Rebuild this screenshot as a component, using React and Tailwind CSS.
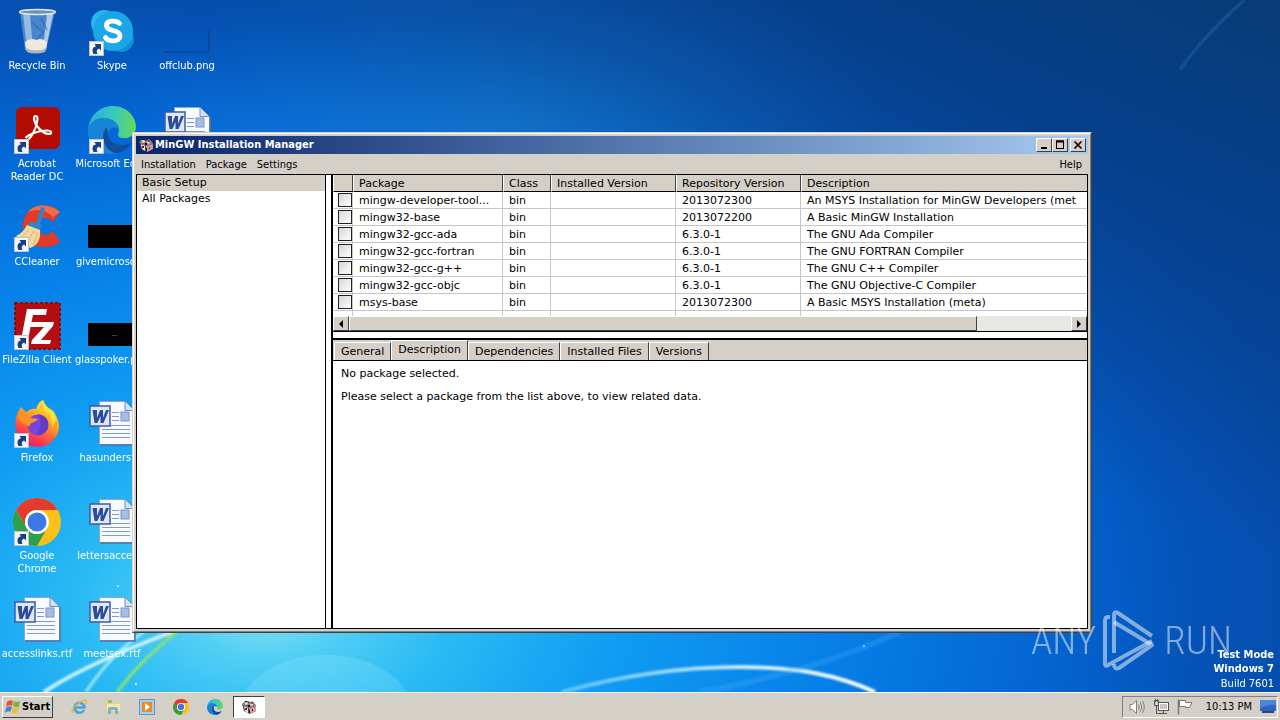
import React, { useState } from "react";

const packages = [
  { name: "mingw-developer-tool...", cls: "bin", repo: "2013072300", desc: "An MSYS Installation for MinGW Developers (met" },
  { name: "mingw32-base", cls: "bin", repo: "2013072200", desc: "A Basic MinGW Installation" },
  { name: "mingw32-gcc-ada", cls: "bin", repo: "6.3.0-1", desc: "The GNU Ada Compiler" },
  { name: "mingw32-gcc-fortran", cls: "bin", repo: "6.3.0-1", desc: "The GNU FORTRAN Compiler" },
  { name: "mingw32-gcc-g++", cls: "bin", repo: "6.3.0-1", desc: "The GNU C++ Compiler" },
  { name: "mingw32-gcc-objc", cls: "bin", repo: "6.3.0-1", desc: "The GNU Objective-C Compiler" },
  { name: "msys-base", cls: "bin", repo: "2013072300", desc: "A Basic MSYS Installation (meta)" },
];

const tabs = ["General", "Description", "Dependencies", "Installed Files", "Versions"];

const raised = "border border-t-white border-l-white border-r-[#404040] border-b-[#404040] bg-[#d4d0c8]";

/* ---------- wallpaper ---------- */

const Wallpaper = () => (
  <svg className="absolute inset-0 h-full w-full" viewBox="0 0 1280 692" preserveAspectRatio="none" aria-hidden="true">
    <defs>
      <radialGradient id="glow" gradientUnits="userSpaceOnUse" cx="0" cy="0" r="1" gradientTransform="translate(265 610) scale(1080 690)">
        <stop offset="0" stopColor="#84e3f3" />
        <stop offset="0.07" stopColor="#52cff4" />
        <stop offset="0.17" stopColor="#2abbf4" />
        <stop offset="0.32" stopColor="#109df2" />
        <stop offset="0.5" stopColor="#0783ea" />
        <stop offset="0.7" stopColor="#0468d6" />
        <stop offset="0.86" stopColor="#0553b8" />
        <stop offset="1" stopColor="#054ba8" />
      </radialGradient>
      <linearGradient id="corner" x1="1" y1="0" x2="0.6" y2="0.5">
        <stop offset="0" stopColor="#0a3566" stopOpacity="0.75" />
        <stop offset="1" stopColor="#02306f" stopOpacity="0" />
      </linearGradient>
      <radialGradient id="topGlow" cx="0.4" cy="0.2" r="0.3">
        <stop offset="0" stopColor="#2090dc" stopOpacity="0.55" />
        <stop offset="1" stopColor="#1b84da" stopOpacity="0" />
      </radialGradient>
      <linearGradient id="swoosh">
        <stop offset="0" stopColor="#8fdcff" stopOpacity="0.6" />
        <stop offset="0.6" stopColor="#e8fbff" stopOpacity="0.9" />
        <stop offset="1" stopColor="#fff" />
      </linearGradient>
      <filter id="soft"><feGaussianBlur stdDeviation="1" /></filter>
    </defs>
    <rect width="1280" height="692" fill="url(#glow)" />
    <rect width="1280" height="692" fill="url(#topGlow)" />
    <rect width="1280" height="692" fill="url(#corner)" />
    <ellipse cx="326" cy="712" rx="86" ry="57" fill="#a8f0ff" opacity="0.2" />
    <g fill="none" filter="url(#soft)">
      <path d="M44 692C80 668 130 648 182 628" stroke="#e4faff" strokeWidth="4" opacity="0.85" />
      <path d="M86 692C102 668 118 650 146 630" stroke="#b8f2ff" strokeWidth="3" opacity="0.8" />
      <path d="M117 692C135 668 155 648 182 628" stroke="#8be36c" strokeWidth="3" />
      <path d="M562 692C620 676 680 667 740 667C800 667 840 676 875 692" stroke="url(#swoosh)" strokeWidth="4" />
      <path d="M700 692C780 678 850 655 900 632" stroke="#4fb4ff" strokeWidth="6" opacity="0.25" />
      <path d="M1180 70C1196 46 1222 20 1244 0" stroke="#5fb0f0" strokeWidth="2" opacity="0.3" />
    </g>
    <circle cx="136" cy="684" r="1" fill="#fff" />
    <circle cx="118" cy="586" r="1" fill="#c8f6ff" />
    <circle cx="864" cy="646" r="1" fill="#9be0ff" />
  </svg>
);

/* ---------- desktop icons, 48 x 48 ---------- */

const Shortcut = () => (
  <g>
    <rect x="1.500" y="33.500" width="14" height="14" fill="#f4f6fa" stroke="#b9c3d2" />
    <path d="M5.500 46C3.500 42 5 38.500 8 38.500L6.500 36H13V42.500L11 40.500C8.500 41.500 8 43.500 9.500 46Z" fill="#173f86" />
  </g>
);

const Icon48 = ({ children, shortcut }) => (
  <svg viewBox="0 0 48 48" className="h-12 w-12 shrink-0" aria-hidden="true">
    {children}
    {shortcut && <Shortcut />}
  </svg>
);

const RecycleBin = () => (
  <Icon48>
    <path d="M7 4L12 42Q24 47 33 42L42 4Z" fill="#8db8e6" opacity="0.5" />
    <path d="M10 6L14 41H20L17 6Z" fill="#e4f1fc" opacity="0.5" />
    <path d="M34 6L30 40L33 41L40 6Z" fill="#eef7ff" opacity="0.6" />
    <path d="M18 14L30 24L22 34M28 10L34 22" stroke="#2563b6" strokeWidth="1.500" fill="none" opacity="0.6" />
    <path d="M12 34Q18 29 23 32Q29 29 34 34L33 42Q23 46 13 42Z" fill="#eee9df" />
    <path d="M13 40Q23 45 33 40L32 44Q22 47 14 44Z" fill="#aeb4bb" />
    <ellipse cx="24.500" cy="4" rx="18" ry="2.500" fill="#6f91b5" stroke="#dfe5ea" strokeWidth="1.500" />
  </Icon48>
);

const Skype = () => (
  <Icon48 shortcut>
    <circle cx="16" cy="15" r="13" fill="#29b5f0" />
    <circle cx="33" cy="31" r="13" fill="#0f8fdc" />
    <circle cx="25" cy="23" r="20" fill="#1ba6e8" />
    <path d="M31.500 15.500C29 12.500 18.500 11.500 18.500 17.500C18.500 24 32 21 32 28C32 34.500 20 34 17.500 29.500" stroke="#fff" strokeWidth="4.800" strokeLinecap="round" fill="none" />
  </Icon48>
);

const BlankPng = () => (
  <Icon48>
    <path d="M1 44H46V22" fill="none" stroke="#083f92" strokeWidth="1.500" opacity="0.7" />
  </Icon48>
);

const Acrobat = () => (
  <Icon48 shortcut>
    <rect x="3" y="1" width="44" height="42" rx="6" fill="#b30b00" />
    <path d="M12 36C18 33 24 22 24.500 13C24.500 9 20.500 9 21 13C22 20 30 28 36 28C39.500 28 38.500 24.500 34 24.500C26 24.500 16 28 12.500 32" fill="none" stroke="#fff" strokeWidth="2.200" />
  </Icon48>
);

const EdgeShape = ({ id }) => (
  <g>
    <defs>
      <linearGradient id={id} x1="0" y1="0.4" x2="1" y2="0.5">
        <stop offset="0" stopColor="#2badde" />
        <stop offset="0.5" stopColor="#36c8c0" />
        <stop offset="1" stopColor="#66d85a" />
      </linearGradient>
    </defs>
    <path d="M0 25C1 9 12 0 25 0C39 0 48 11 48 21C48 29 41 33 34 32C29 31 30 28 31 25C31 17 24 12 15 13C7 14 2 18 0 25Z" fill={`url(#${id})`} />
    <path d="M0 25C1 16 9 11 17 12C25 13 31 18 31 24C27 19 21 22 20 28C19 37 28 43 39 38L44 36C38 45 31 48 24 48C10 48 0 38 0 25Z" fill="#1784d6" />
    <path d="M18 21C12 31 16 44 28 47.500C35 47 41 42 44 36C33 42 22 38 20 29Q20 24 18 21Z" fill="#114f9c" />
  </g>
);

const Edge = () => (
  <Icon48 shortcut>
    <EdgeShape id="edgeBig" />
  </Icon48>
);

const CCleaner = () => (
  <Icon48 shortcut>
    <path d="M47 8C36-3 11-1 10 22C10 44 34 48 47 38L40 27C34 34 25 31 25 22C25 14 34 11 40 18Z" fill="#e23a25" />
    <path d="M47 8C38 0 22-1 15 8Q29 2 40 13Z" fill="#f36b4a" />
    <path d="M28 3L32 4L27 20L29 22L26 27L14 22L17 18L23 19Z" fill="#2e86c6" />
    <path d="M14 21L27 26C28 36 24 42 17 44L3 32Q10 29 14 21Z" fill="#f3d79b" />
    <path d="M16 25L8 34M21 26L14 40M25 28L20 42" stroke="#dcb877" strokeWidth="1" />
  </Icon48>
);

const BlackTile = ({ mark }) => (
  <Icon48>
    <rect y="21" width="48" height="23" fill="#000" />
    {mark && <path d="M24 33.500h5" stroke="#27541f" />}
  </Icon48>
);

const FileZilla = () => (
  <Icon48 shortcut>
    <rect x="2" y="1" width="45" height="46" fill="#b50e12" stroke="#8d080b" strokeWidth="2" strokeDasharray="3 2" />
    <path d="M14 7H34L33 13H20L18.500 20H28L27 25H17.500L15 38H8Z" fill="#fff" />
    <path d="M24 20H41L40 24L28 38H38L37 42H18L19 38L31 25H23Z" fill="#fff" />
  </Icon48>
);

const Firefox = () => (
  <Icon48 shortcut>
    <defs>
      <linearGradient id="fox" x1="0.8" y1="0" x2="0.3" y2="1">
        <stop offset="0" stopColor="#fff04a" />
        <stop offset="0.45" stopColor="#ff9a1f" />
        <stop offset="0.8" stopColor="#fb3750" />
        <stop offset="1" stopColor="#e5186e" />
      </linearGradient>
    </defs>
    <path d="M5 12L8 7L13 12Q18 8 23 9Q25 2 30 0Q32 7 39 10Q50 23 44 35Q37 47 25 47Q9 46 4 33Q0 22 5 12Z" fill="url(#fox)" />
    <circle cx="25" cy="25" r="10.500" fill="#7545dd" />
    <path d="M25 14Q37 16 35 28Q32 34 24 35Q31 25 25 14Z" fill="#5937b5" opacity="0.7" />
    <path d="M4 16Q14 14 18 18L25 19Q23 22 18 23L16 27Q14 24 10 24Z" fill="#ff9024" />
    <path d="M30 0Q28 7 34 13Q40 18 39 27Q45 20 41 12Q33 8 30 0Z" fill="#ffdf3a" />
  </Icon48>
);

const ChromeShape = () => (
  <g>
    <circle cx="24" cy="24" r="24" fill="#fbc116" />
    <path d="M3.200 12A24 24 0 0 1 44.800 12H24A12 12 0 0 0 13.600 30Z" fill="#e33b2e" />
    <path d="M3.200 12L13.600 30A12 12 0 0 0 34.400 30L24 48A24 24 0 0 1 3.200 12Z" fill="#2da04b" />
    <circle cx="24" cy="24" r="12" fill="#fff" />
    <circle cx="24" cy="24" r="9.500" fill="#3a78e6" />
  </g>
);

const Chrome = () => (
  <Icon48 shortcut>
    <ChromeShape />
  </Icon48>
);

const WordDoc = () => (
  <Icon48>
    <path d="M11.500 1.500H37L46.500 11V44.500H11.500Z" fill="#f7faff" stroke="#8ea4cf" />
    <path d="M47 11V45H12" fill="none" stroke="#5570ad" strokeWidth="1.500" />
    <path d="M37 1V10.500H46.500Z" fill="#d5e2f6" stroke="#6f8cc2" />
    <path d="M24 12.500H31M24 16.500H31M24 20.500H31M14 25.500H42M14 29.500H42M14 33.500H42M14 37.500H42" stroke="#8199cf" />
    <rect x="33" y="12" width="8" height="9" fill="#a7bce4" stroke="#7c94cb" />
    <rect x="2" y="6" width="20" height="20" fill="#dfe8f8" stroke="#3b5ba8" strokeWidth="1.500" />
    <path d="M4.500 10H9L9 18L12 10H15L15 18L18 10H21L15.500 23H12.500V16L9.500 23H6.500Z" fill="#2c4c9c" />
  </Icon48>
);

const desktopIcons = [
  { label: "Recycle Bin", Icon: RecycleBin },
  { label: "Acrobat Reader DC", Icon: Acrobat },
  { label: "CCleaner", Icon: CCleaner },
  { label: "FileZilla Client", Icon: FileZilla },
  { label: "Firefox", Icon: Firefox },
  { label: "Google Chrome", Icon: Chrome },
  { label: "accesslinks.rtf", Icon: WordDoc },
  { label: "Skype", Icon: Skype },
  { label: "Microsoft Edge", Icon: Edge },
  { label: "givemicrosof...", Icon: BlackTile },
  { label: "glasspoker.png", Icon: () => <BlackTile mark /> },
  { label: "hasunderst...", Icon: WordDoc },
  { label: "lettersacces...", Icon: WordDoc },
  { label: "meetsex.rtf", Icon: WordDoc },
  { label: "offclub.png", Icon: BlankPng },
  { label: "", Icon: WordDoc },
];

// labels that wrap onto a second line
const wrapped = ["Acrobat Reader DC", "Google Chrome"];

const DesktopIcon = ({ label, Icon }) => (
  <div className="flex h-[98px] w-[74px] flex-col items-center gap-[3px]">
    <Icon />
    <span
      className={`text-center text-[11px] leading-[13px] text-white ${
        wrapped.includes(label) ? "w-[60px]" : "whitespace-nowrap"
      }`}
    >
      {label}
    </span>
  </div>
);

/* ---------- small icons ---------- */

const MingwIcon = () => (
  <svg viewBox="0 0 16 16" className="h-4 w-4 shrink-0" aria-hidden="true">
    <path d="M1 5L7 2L15 7V12L9 15L3 12Z" fill="#4a4041" />
    <path d="M3 7L7 9V14L4 12Z" fill="#eee6e4" />
    <path d="M8 9L15 7V12L9 15Z" fill="#d79a9d" />
    <path d="M1 5L4 2L8 4L11 2L15 6L14 8L8 9L3 7Z" fill="#8d8083" />
    <path d="M3 4L6 3L7 5L5 6ZM9 5L11 4L12 6L10 7Z" fill="#e8dedd" />
    <path d="M10 3H12V5H10ZM5 6H7V7H5Z" fill="#8f4650" />
    <path d="M4 9H6V11H4ZM11 10H12V12H11Z" fill="#70222c" />
    <path d="M2 4H4V5H2ZM12 3H13V4H12Z" fill="#4b9a92" />
    <path d="M7 6H9V8H7ZM8 11H9V14H8ZM4 2H6V3H4Z" fill="#1a1517" />
  </svg>
);

const StartFlag = () => (
  <svg viewBox="0 0 16 16" className="h-4 w-4" aria-hidden="true">
    <path d="M2 3Q5 0 8 2L7 7Q4 5 1 8Z" fill="#e8552b" />
    <path d="M9 2Q12 4 15 2L14 8Q11 9 8 7Z" fill="#76b83f" />
    <path d="M1 9Q4 6 7 8L5 13Q3 11 0 14Z" fill="#3d83d6" />
    <path d="M8 8Q11 10 14 9L12 14Q9 15 6 13Z" fill="#f4bd2b" />
  </svg>
);

const IeIcon = () => (
  <svg viewBox="0 0 16 16" className="h-4 w-4" aria-hidden="true">
    <path d="M13 11A5 5 0 1 1 13.500 8.500H4" fill="none" stroke="#45a7e0" strokeWidth="2.600" />
    <path d="M1 14C0 10 8 2 15 1C16 2 15 4 14 5" fill="none" stroke="#e8b92f" strokeWidth="1.300" />
  </svg>
);

const ExplorerIcon = () => (
  <svg viewBox="0 0 16 16" className="h-4 w-4" aria-hidden="true">
    <path d="M1 2H6L7 4H14V14H1Z" fill="#e9cf70" />
    <path d="M3 1H7V4H3Z" fill="#8cc27c" />
    <path d="M2 5H15V12H2Z" fill="#f8e9a6" />
    <path d="M3 15V10Q3 8 5 8H11Q13 8 13 10V15H10V11H6V15Z" fill="#75b5dd" />
  </svg>
);

const MediaIcon = () => (
  <svg viewBox="0 0 16 16" className="h-4 w-4" aria-hidden="true">
    <rect x="0.500" y="0.500" width="15" height="15" fill="#a8cde8" stroke="#5f98c4" />
    <rect x="3" y="3" width="10" height="10" fill="#f08a1c" />
    <path d="M6 4L11 8L6 12Z" fill="#fff" />
  </svg>
);

const SpeakerIcon = () => (
  <svg viewBox="0 0 16 16" className="h-4 w-4" fill="none" stroke="#808080" aria-hidden="true">
    <path d="M1 5.500H3.500L7.500 1.500V14.500L3.500 10.500H1Z" fill="#fff" />
    <path d="M9.500 5.500Q11 8 9.500 10.500M11.500 3.500Q14 8 11.500 12.500M13.500 2Q17 8 13.500 14" />
  </svg>
);

const NetworkIcon = () => (
  <svg viewBox="0 0 16 16" className="h-4 w-4" fill="none" stroke="#555" aria-hidden="true">
    <rect x="5.500" y="3.500" width="10" height="8" fill="#fff" />
    <rect x="7" y="5" width="7" height="5" fill="#c6c6c6" stroke="none" />
    <path d="M1.500 1.500H5.500V6.500H1.500ZM2.500 0V3M4.500 0V3M3.500 7V14.500H14M10.500 12V14" />
  </svg>
);

const FlagIcon = () => (
  <svg viewBox="0 0 16 16" className="h-4 w-4" aria-hidden="true">
    <path d="M1.500 0.500V15.500" stroke="#777" strokeWidth="1.500" />
    <path d="M2.500 1.500H8.500V3.500H15L12.500 8.500H8.500V7.500H2.500Z" fill="#fff" stroke="#777" />
  </svg>
);

const ShowDesktopIcon = () => (
  <svg viewBox="0 0 16 14" className="h-[14px] w-4" aria-hidden="true">
    <rect width="16" height="11" fill="#2c62c0" />
    <path d="M0 0H16V5Q8 4 0 8Z" fill="#4d86d8" />
    <path d="M2 11H14V13H2Z" fill="#27477f" />
  </svg>
);

/* ---------- installer window ---------- */

const TitleBar = () => (
  <div className="flex h-[18px] items-center bg-gradient-to-r from-[#0a246a] to-[#a6caf0] px-[2px]">
    <MingwIcon />
    <h1 className="ml-px flex-1 text-[11px] leading-4 font-bold text-white">MinGW Installation Manager</h1>
    <div className="flex">
      <button type="button" aria-label="Minimize" className={`flex h-[14px] w-4 items-center justify-center ${raised}`}>
        <svg viewBox="0 0 10 10" className="h-[10px] w-[10px]"><path d="M2 8H8" stroke="#000" strokeWidth="2" /></svg>
      </button>
      <button type="button" aria-label="Maximize" className={`flex h-[14px] w-4 items-center justify-center ${raised}`}>
        <svg viewBox="0 0 10 10" className="h-[10px] w-[10px]"><path d="M1 1H9M1.500 1V9M8.500 1V9M1 8.500H9" stroke="#000" /><path d="M1 1.500H9" stroke="#000" strokeWidth="2" /></svg>
      </button>
      <button type="button" aria-label="Close" className={`ml-[2px] flex h-[14px] w-4 items-center justify-center ${raised}`}>
        <svg viewBox="0 0 10 10" className="h-[10px] w-[10px]"><path d="M1.500 1.500L8.500 8.500M8.500 1.500L1.500 8.500" stroke="#000" strokeWidth="1.600" /></svg>
      </button>
    </div>
  </div>
);

const MenuBar = () => (
  <nav className="flex h-5 items-center gap-[10px] px-[5px] pt-[2px] text-[11px] leading-4">
    <button type="button">Installation</button>
    <button type="button">Package</button>
    <button type="button">Settings</button>
    <button type="button" className="mr-px ml-auto">Help</button>
  </nav>
);

const headCell =
  "h-[17px] truncate border-r border-b border-l border-r-[#404040] border-b-black border-l-white bg-[#d4d0c8] px-[5px] pt-[2px] text-left leading-[14px] font-normal last:border-r-0";
const bodyCell =
  "h-[17px] overflow-hidden border-r border-b border-[#c6c6c6] px-[6px] pt-[2px] leading-[14px] whitespace-nowrap last:border-r-0";

const PackageTable = () => (
  <div className="h-[141px] overflow-hidden">
    <table className="w-full table-fixed border-separate border-spacing-0">
      <colgroup>
        <col className="w-[20px]" />
        <col className="w-[150px]" />
        <col className="w-[48px]" />
        <col className="w-[125px]" />
        <col className="w-[125px]" />
        <col />
      </colgroup>
      <thead>
        <tr>
          <th className={headCell} aria-label="Selected"></th>
          <th className={headCell}>Package</th>
          <th className={headCell}>Class</th>
          <th className={headCell}>Installed Version</th>
          <th className={headCell}>Repository Version</th>
          <th className={headCell}>Description</th>
        </tr>
      </thead>
      <tbody>
        {packages.map((pkg) => (
          <tr key={pkg.name}>
            <td className="h-[17px] border-r border-b border-[#c6c6c6] pl-[5px]">
              <input
                type="checkbox"
                aria-label={pkg.name}
                className="block h-[14px] w-[14px] appearance-none border border-[#222] bg-gradient-to-br from-[#d6d6d6] to-white"
              />
            </td>
            <td className={bodyCell}>{pkg.name}</td>
            <td className={bodyCell}>{pkg.cls}</td>
            <td className={bodyCell}></td>
            <td className={bodyCell}>{pkg.repo}</td>
            <td className={bodyCell}>{pkg.desc}</td>
          </tr>
        ))}
        {/* empty row, cut off by the scrollbar */}
        <tr>
          <td className={bodyCell}></td>
          <td className={bodyCell}></td>
          <td className={bodyCell}></td>
          <td className={bodyCell}></td>
          <td className={bodyCell}></td>
          <td></td>
        </tr>
      </tbody>
    </table>
  </div>
);

const ScrollBar = () => (
  <div className="flex h-4 border-b border-black bg-[#e9e7e3]">
    <button type="button" aria-label="Scroll left" className={`flex w-4 items-center justify-center ${raised}`}>
      <svg viewBox="0 0 4 8" className="h-2 w-1"><path d="M4 0V8L0 4Z" /></svg>
    </button>
    <div className="flex flex-1">
      <div className={`w-[87%] ${raised}`}></div>
    </div>
    <button type="button" aria-label="Scroll right" className={`flex w-4 items-center justify-center ${raised}`}>
      <svg viewBox="0 0 4 8" className="h-2 w-1"><path d="M0 0V8L4 4Z" /></svg>
    </button>
  </div>
);

const Tabs = ({ active, setActive }) => (
  <div role="tablist" className="flex h-[21px] items-end border-b border-black bg-[#d4d0c8] pl-px">
    {tabs.map((tab) => (
      <button
        key={tab}
        type="button"
        role="tab"
        aria-selected={active === tab}
        onClick={() => setActive(tab)}
        className={`border-t border-r border-l border-t-white border-r-[#404040] border-l-white px-[6px] leading-4 ${
          active === tab ? "h-5 pb-[2px]" : "h-[18px]"
        }`}
      >
        {tab}
      </button>
    ))}
  </div>
);

const InstallerWindow = () => {
  const [activeTab, setActiveTab] = useState("Description");

  return (
    <section className="absolute top-[132px] right-[188px] bottom-[59px] left-[132px] border border-t-[#d4d0c8] border-r-[#404040] border-b-[#404040] border-l-[#d4d0c8] bg-[#d4d0c8]">
      <div className="flex h-full flex-col border border-t-white border-r-[#808080] border-b-[#808080] border-l-white p-[2px]">
        <TitleBar />
        <MenuBar />
        <div className="flex min-h-0 flex-1 border border-black bg-white font-['DejaVu_Sans',Verdana,sans-serif] text-[11px]">
          <aside className="mr-[5px] w-[189px] shrink-0 border-r border-black">
            <ul className="leading-4">
              <li className="bg-[#d4d0c8] px-[5px]">Basic Setup</li>
              <li className="px-[5px]">All Packages</li>
            </ul>
          </aside>
          <div className="flex min-w-0 flex-1 flex-col border-l-2 border-black">
            <PackageTable />
            <ScrollBar />
            <div className="mt-[6px] flex flex-1 flex-col border-t-2 border-black">
              <Tabs active={activeTab} setActive={setActiveTab} />
              <div role="tabpanel" className="flex flex-col gap-[7px] px-2 py-[5px] leading-4">
                <p>No package selected.</p>
                <p>Please select a package from the list above, to view related data.</p>
              </div>
            </div>
          </div>
        </div>
      </div>
    </section>
  );
};

/* ---------- taskbar ---------- */

const Taskbar = () => (
  <footer className="flex h-7 items-center border-t border-white bg-[#d4d0c8] px-[2px] text-[11px]">
    <button type="button" className={`flex h-[22px] items-center gap-px px-[2px] font-bold ${raised}`}>
      <StartFlag />
      <span className="pt-[2px]">Start</span>
    </button>
    <div className="ml-[18px] flex items-center gap-[18px]">
      <button type="button" aria-label="Internet Explorer"><IeIcon /></button>
      <button type="button" aria-label="Windows Explorer"><ExplorerIcon /></button>
      <button type="button" aria-label="Media Player"><MediaIcon /></button>
      <button type="button" aria-label="Chrome"><svg viewBox="0 0 48 48" className="h-4 w-4"><ChromeShape /></svg></button>
      <button type="button" aria-label="Edge"><svg viewBox="0 0 48 48" className="h-4 w-4"><EdgeShape id="edgeSmall" /></svg></button>
    </div>
    <button
      type="button"
      aria-label="MinGW Installation Manager"
      className="ml-[10px] flex h-[22px] w-8 items-center justify-center border border-t-[#404040] border-r-white border-b-white border-l-[#404040] bg-white"
    >
      <MingwIcon />
    </button>
    <div className="ml-auto flex h-[22px] items-center gap-2 border border-t-[#808080] border-r-white border-b-white border-l-[#808080] pr-px pl-[6px]">
      <SpeakerIcon />
      <NetworkIcon />
      <FlagIcon />
      <time className="ml-[5px] pt-[2px]">10:13 PM</time>
      <ShowDesktopIcon />
    </div>
  </footer>
);

const Watermark = () => (
  <div className="absolute right-[48px] bottom-[20px] flex items-center gap-[6px] font-['Roboto_Condensed_Light','Roboto_Condensed',Roboto,sans-serif] text-[39px] leading-[62px] text-white/50">
    <span>ANY</span>
    <svg viewBox="0 0 56 62" className="h-[62px] w-14" fill="none" stroke="currentColor" strokeWidth="4" strokeLinejoin="round" aria-hidden="true">
      <path d="M8 7H6Q3 7 3 11V54Q3 57 6 55L50 31" />
      <path d="M50 26L16 3Q12 1 12 5V43" />
      <path d="M12 12L50 35L17 58Q12 60 12 54" />
    </svg>
    <span>RUN</span>
  </div>
);

const App = () => {
  return (
    <div className="flex h-screen flex-col overflow-hidden font-['DejaVu_Sans_Condensed',Tahoma,sans-serif] text-black">
      <main className="relative min-h-0 flex-1 overflow-hidden bg-[#0468d2]">
        <Wallpaper />
        <div className="relative grid w-max grid-flow-col grid-rows-7 gap-x-px pt-2">
          {desktopIcons.map((item, index) => (
            <DesktopIcon key={index} {...item} />
          ))}
        </div>
        <InstallerWindow />
        <Watermark />
        <div className="absolute right-[6px] bottom-0 text-right text-[11px] leading-[14px] text-white">
          <p className="font-bold">Test Mode</p>
          <p className="font-bold">Windows 7</p>
          <p className="leading-4">Build 7601</p>
        </div>
      </main>
      <Taskbar />
    </div>
  );
};

export default App;
